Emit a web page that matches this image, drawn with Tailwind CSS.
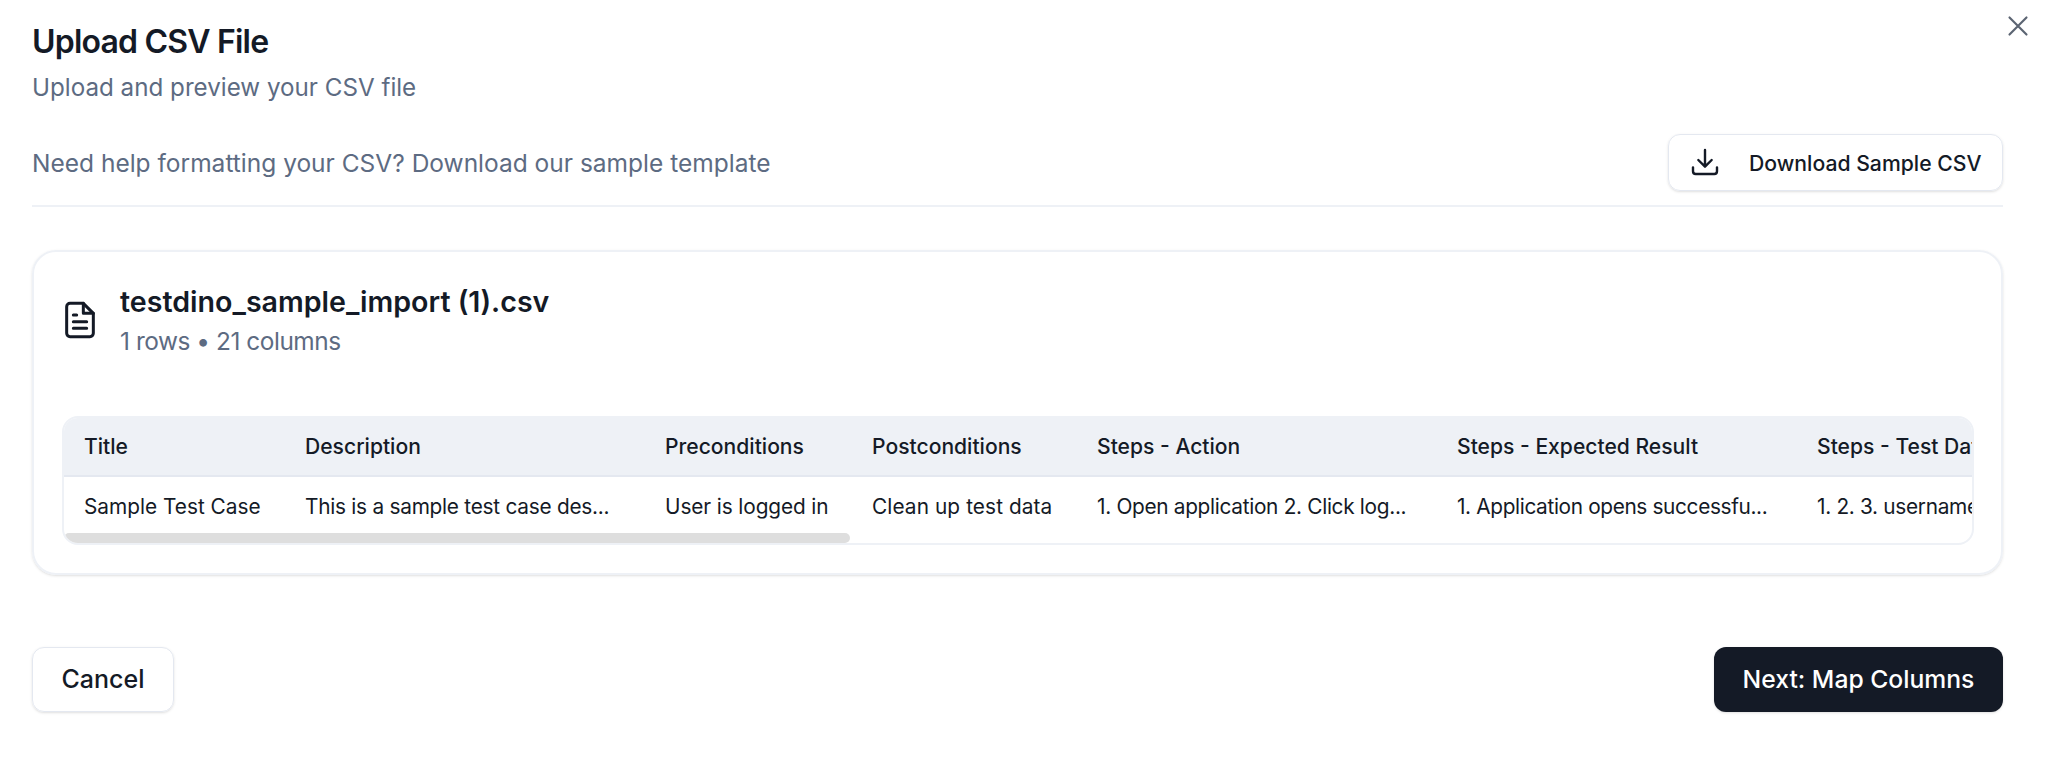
<!DOCTYPE html>
<html><head><meta charset="utf-8"><script src="https://cdn.jsdelivr.net/npm/@tailwindcss/browser@4"></script></head>
<body class="bg-white font-['Inter',sans-serif] text-[#141a26]">
<div class="relative w-[2048px] h-[770px] overflow-hidden pl-[32px] pr-[45px] pt-[22px]">
  <button class="absolute top-[9px] right-[13px] text-[#5b6472]"><svg class="w-[34px] h-[34px]" viewBox="0 0 24 24" fill="none" stroke="currentColor" stroke-width="1.500" stroke-linecap="round"><path d="M18 6 6 18M6 6l12 12"/></svg></button>
  <h2 class="text-[32px] leading-[40px] font-semibold tracking-[-0.8px]">Upload CSV File</h2>
  <p class="text-[24.200px] leading-[32px] mt-[10px] text-[#5d6b82]">Upload and preview your CSV file</p>
  <div class="flex items-center justify-between mt-[30px] h-[73px] border-b-2 border-[#eef1f6] pb-[15px]">
    <span class="text-[24.500px] pt-[2px] text-[#5d6b82]">Need help formatting your CSV? Download our sample template</span>
    <button class="flex items-center w-[335px] h-[57px] rounded-[12px] border border-[#e4e8f0] shadow-sm pl-[20px] text-[21.200px] font-[450]"><svg class="w-[32px] h-[32px] mr-[28px]" viewBox="0 0 24 24" fill="none" stroke="currentColor" stroke-width="1.800" stroke-linecap="round" stroke-linejoin="round"><path d="M12 3v12M7 10.500l5 5 5-5M3 16v3a2 2 0 0 0 2 2h14a2 2 0 0 0 2-2v-3"/></svg><span class="pt-[3px]">Download Sample CSV</span></button>
  </div>
  <div class="mt-[43px] h-[325px] rounded-[24px] border-2 border-[#eef1f6] shadow-sm px-[28px] pt-[28px]">
    <div class="flex items-center h-[79px]">
      <svg class="w-[40px] h-[40px] -ml-[2px] mr-[20px]" viewBox="0 0 24 24" fill="none" stroke="currentColor" stroke-width="1.800" stroke-linecap="round" stroke-linejoin="round"><path d="M14 2H6a2 2 0 0 0-2 2v16a2 2 0 0 0 2 2h12a2 2 0 0 0 2-2V8z"/><path d="M14 2v6h6M8 13h8M8 17h8M8 9h2"/></svg>
      <div>
        <div class="text-[28.600px] leading-[38px] font-semibold">testdino_sample_import (1).csv</div>
        <div class="text-[24.400px] leading-[32px] mt-[4px] tracking-[-0.45px] text-[#5d6b82]">1 rows • 21 columns</div>
      </div>
    </div>
    <div class="relative mt-[57px] w-[1912px] h-[129px] rounded-[16px] border-2 border-[#eef1f6] overflow-hidden text-[20.800px] whitespace-nowrap">
      <div class="flex h-[59px] items-center bg-[#eef1f6] border-b-2 border-[#e4e8f0] text-[21.100px] font-[450]">
        <div class="w-[241px] pl-[20px] shrink-0">Title</div><div class="w-[360px] shrink-0">Description</div><div class="w-[207px] shrink-0">Preconditions</div><div class="w-[225px] shrink-0">Postconditions</div><div class="w-[360px] shrink-0">Steps - Action</div><div class="w-[360px] shrink-0">Steps - Expected Result</div><div class="shrink-0">Steps - Test Data</div>
      </div>
      <div class="flex h-[60px] items-center">
        <div class="w-[241px] pl-[20px] shrink-0">Sample Test Case</div><div class="w-[360px] shrink-0 tracking-[-0.25px]">This is a sample test case des...</div><div class="w-[207px] shrink-0 tracking-[-0.1px]">User is logged in</div><div class="w-[225px] shrink-0 tracking-[0.1px]">Clean up test data</div><div class="w-[360px] shrink-0 tracking-[-0.3px]">1. Open application 2. Click log...</div><div class="w-[360px] shrink-0 tracking-[-0.35px]">1. Application opens successfu...</div><div class="shrink-0 tracking-[-0.3px]">1. 2. 3. username</div>
      </div>
      <div class="absolute left-0 bottom-0 w-[786px] h-[10px] rounded-full bg-[#dedede]"></div>
    </div>
  </div>
  <div class="flex justify-between items-center mt-[72px]">
    <button class="w-[142px] h-[65px] rounded-[12px] border border-[#e4e8f0] shadow-sm text-[25px] font-[450]">Cancel</button>
    <button class="w-[289px] h-[65px] rounded-[12px] bg-[#141a26] text-white shadow-sm text-[24.700px] font-[450]">Next: Map Columns</button>
  </div>
</div>
</body></html>
